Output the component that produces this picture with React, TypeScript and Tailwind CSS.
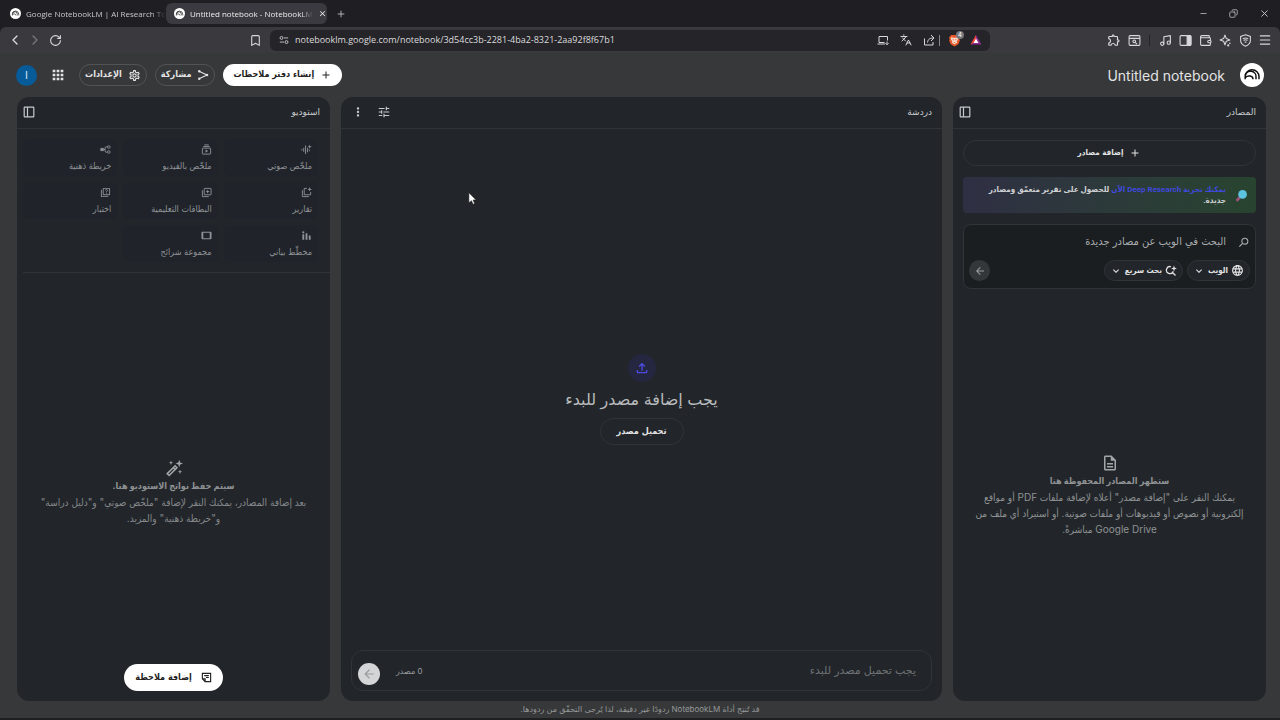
import type { ReactNode } from 'react'
import {
  MdAdd, MdApps, MdArrowBack, MdClose, MdExpandMore, MdLanguage,
  MdMoreVert, MdOutlineDescription, MdOutlineExtension, MdOutlineFileUpload, MdOutlineQuiz,
  MdOutlineSettings, MdOutlineTablet, MdSearch, MdTune,
} from 'react-icons/md'
import {
  Bookmark, ChevronLeft, ChevronRight, Copy, Languages, Menu, Minus, Music, Plus,
  RotateCw, Wallet, X,
} from 'lucide-react'

type IconProps = { className?: string }

function NotebookLogo({ className }: IconProps) {
  return (
    <svg viewBox="0 0 24 24" className={className} fill="none" aria-hidden="true">
      <circle cx="12" cy="12" r="12" fill="#fff" />
      <g stroke="#111" strokeWidth="1.500">
        <path d="M5.200 16.200v-2.600a6.900 6.900 0 0 1 13.800 0v2.600" />
        <path d="M5.200 12.400a5.500 5.500 0 0 1 10.800 2v1.800" />
        <path d="M5.200 14.600c2.800-2.600 7.800-1.900 7.800 1.600" />
      </g>
    </svg>
  )
}

function PanelIcon({ className }: IconProps) {
  return (
    <svg viewBox="0 0 20 20" className={className} fill="none" stroke="currentColor" strokeWidth="2" aria-hidden="true">
      <rect x="2" y="2" width="16" height="16" rx="1" />
      <path d="M7.500 2v16" />
    </svg>
  )
}

function ShareIcon({ className }: IconProps) {
  return (
    <svg viewBox="0 0 24 24" className={className} fill="none" stroke="currentColor" strokeWidth="2.200" aria-hidden="true">
      <path d="M5 5l15 7-15 7" />
      <g fill="currentColor" stroke="none">
        <circle cx="4.500" cy="4.500" r="2.500" />
        <circle cx="20" cy="12" r="2.500" />
        <circle cx="4.500" cy="19.500" r="2.500" />
      </g>
    </svg>
  )
}

function AudioIcon({ className }: IconProps) {
  return (
    <svg viewBox="0 0 24 24" className={className} fill="currentColor" aria-hidden="true">
      <path d="M1 11h2v3H1zM5 8h2v9H5zM9 3h2v19H9zM13 8h2v10h-2zM17 12h2v4h-2z" />
      <path d="M19 1l1.200 3.800L24 6l-3.800 1.200L19 11l-1.200-3.800L14 6l3.800-1.200z" />
    </svg>
  )
}

function VideoIcon({ className }: IconProps) {
  return (
    <svg viewBox="0 0 24 24" className={className} fill="none" stroke="currentColor" strokeWidth="2" aria-hidden="true">
      <path d="M7 2h10M5 5.500h14" />
      <rect x="3" y="9" width="18" height="13" rx="1" />
      <path d="M10 12v7l5.500-3.500z" fill="currentColor" stroke="none" />
    </svg>
  )
}

function MindMapIcon({ className }: IconProps) {
  return (
    <svg viewBox="0 0 24 24" className={className} fill="none" stroke="currentColor" strokeWidth="2" aria-hidden="true">
      <rect x="2" y="9.500" width="5" height="5" fill="currentColor" />
      <path d="M7 12h4m5-6h-2c-2 0-3 1-3 3v6c0 2 1 3 3 3h2" />
      <rect x="16" y="4" width="6" height="5" rx="2" />
      <rect x="16" y="15" width="6" height="5" rx="2" />
    </svg>
  )
}

function ReportIcon({ className }: IconProps) {
  return (
    <svg viewBox="0 0 24 24" className={className} fill="none" stroke="currentColor" strokeWidth="2" aria-hidden="true">
      <path d="M3 7v14h14M13 3H7v14h14v-6" />
      <path d="M19 0l1.300 3.700L24 5l-3.700 1.300L19 10l-1.300-3.700L14 5l3.700-1.300z" fill="currentColor" stroke="none" />
    </svg>
  )
}

function CardsIcon({ className }: IconProps) {
  return (
    <svg viewBox="0 0 24 24" className={className} fill="none" stroke="currentColor" strokeWidth="2" aria-hidden="true">
      <path d="M3 7v14h14" />
      <rect x="7" y="3" width="15" height="14" rx="1" />
      <path d="M14.500 6l1.300 2.800 2.800 1.200-2.800 1.200-1.300 2.800-1.300-2.800-2.800-1.200 2.800-1.200z" fill="currentColor" stroke="none" />
    </svg>
  )
}

function ChartIcon({ className }: IconProps) {
  return (
    <svg viewBox="0 0 24 24" className={className} fill="currentColor" aria-hidden="true">
      <circle cx="5" cy="5" r="2.500" />
      <path d="M3 9h4v12H3zM10 7h4v14h-4zM17 12h4v9h-4z" />
    </svg>
  )
}

function WandIcon({ className }: IconProps) {
  return (
    <svg viewBox="0 0 24 24" className={className} fill="none" stroke="currentColor" strokeWidth="2" aria-hidden="true">
      <path d="M3 19.500L13.500 9l2.500 2.500L5.500 22zM11 11.500l2.500 2.500" />
      <path d="M19 1l1.300 3.700L24 6l-3.700 1.300L19 11l-1.300-3.700L14 6l3.700-1.300zM8 2l.8 2.200L11 5l-2.200.8L8 8l-.8-2.200L5 5l2.200-.8zM20 14l.8 2.200L23 17l-2.200.8L20 20l-.8-2.200L17 17l2.200-.8z" fill="currentColor" stroke="none" />
    </svg>
  )
}

function NoteIcon({ className }: IconProps) {
  return (
    <svg viewBox="0 0 24 24" className={className} fill="none" stroke="currentColor" strokeWidth="2.500" aria-hidden="true">
      <path d="M3 3h18v18H9l-6-6zM3 15h6v6M7 8h10M11 12h6" />
    </svg>
  )
}

function QuickSearchIcon({ className }: IconProps) {
  return (
    <svg viewBox="0 0 24 24" className={className} fill="none" stroke="currentColor" strokeWidth="2.500" aria-hidden="true">
      <path d="M12 3.500a7 7 0 1 0 4.500 9M15 15l6 6" />
      <path d="M18 1l1.500 4.500L24 7l-4.500 1.500L18 13l-1.500-4.500L12 7l4.500-1.500z" fill="currentColor" stroke="none" />
    </svg>
  )
}

function SiteIcon({ className }: IconProps) {
  return (
    <svg viewBox="0 0 24 24" className={className} fill="none" stroke="currentColor" strokeWidth="2" aria-hidden="true">
      <circle cx="6" cy="7" r="3.500" />
      <circle cx="18" cy="17" r="3.500" />
      <path d="M12 7h10M2 17h10" />
    </svg>
  )
}

function InstallIcon({ className }: IconProps) {
  return (
    <svg viewBox="0 0 24 24" className={className} fill="none" stroke="currentColor" strokeWidth="2" aria-hidden="true">
      <path d="M21 13V5H4v12h11M1 20h15M20 15v6M17 18.500l3 3 3-3" />
    </svg>
  )
}

function SendOutIcon({ className }: IconProps) {
  return (
    <svg viewBox="0 0 24 24" className={className} fill="none" stroke="currentColor" strokeWidth="2" aria-hidden="true">
      <path d="M3 9v13h17v-6M16 2l6 6-6 6M21 8c-7 0-11 2-12 9" />
    </svg>
  )
}

function TabSearchIcon({ className }: IconProps) {
  return (
    <svg viewBox="0 0 24 24" className={className} fill="none" stroke="currentColor" strokeWidth="2" aria-hidden="true">
      <rect x="2" y="3" width="20" height="18" rx="2" />
      <path d="M2 8h20M13.500 15.500l3 3" />
      <circle cx="11.500" cy="13.500" r="2.500" />
    </svg>
  )
}

function SidebarIcon({ className }: IconProps) {
  return (
    <svg viewBox="0 0 24 24" className={className} fill="none" stroke="currentColor" strokeWidth="2" aria-hidden="true">
      <rect x="2" y="3" width="20" height="18" rx="2" />
      <path d="M15 3h5a2 2 0 0 1 2 2v14a2 2 0 0 1-2 2h-5z" fill="currentColor" />
    </svg>
  )
}

function LeoIcon({ className }: IconProps) {
  return (
    <svg viewBox="0 0 24 24" className={className} fill="none" stroke="currentColor" strokeWidth="2" strokeLinejoin="round" aria-hidden="true">
      <path d="M11 2l2.500 6.500L20 11l-6.500 2.500L11 20l-2.500-6.500L2 11l6.500-2.500z" />
      <circle cx="20" cy="17" r="1.500" fill="currentColor" stroke="none" />
      <circle cx="17" cy="21" r="2" fill="currentColor" stroke="none" />
    </svg>
  )
}

function VpnIcon({ className }: IconProps) {
  return (
    <svg viewBox="0 0 24 24" className={className} fill="none" stroke="currentColor" strokeWidth="2" aria-hidden="true">
      <path d="M12 1.500l9 3V12c0 5-4 8.500-9 10.500C7 20.500 3 17 3 12V4.500z" />
      <path d="M7 9c3-2 7-2 10 0M8.500 12c2-1.500 5-1.500 7 0M10.500 15h3" />
    </svg>
  )
}

function BraveIcon({ className }: IconProps) {
  return (
    <svg viewBox="0 0 24 24" className={className} aria-hidden="true">
      <path d="M6 2h12l4 4-1 4 1 2-3 7-7 4-7-4-3-7 1-2-1-4z" fill="#e8592b" />
      <path d="M6 6l4 1h4l4-1 1 3-3 5 1 2-5 3-5-3 1-2-3-5z" fill="#f7d9cd" />
      <path d="M8 9l3 1-1 2zM16 9l-3 1 1 2zM10 15h4l-2 2z" fill="#e8592b" />
    </svg>
  )
}

function BatIcon({ className }: IconProps) {
  return (
    <svg viewBox="0 0 24 24" className={className} aria-hidden="true">
      <path d="M12 2L1 21h22z" fill="#8a2a8f" />
      <path d="M12 2L1 21l11-6z" fill="#e8442f" />
      <path d="M12 9l-5 9h10z" fill="#fff" />
    </svg>
  )
}

function ToolButton({ label, children, className = '' }: { label: string; children: ReactNode; className?: string }) {
  return (
    <button aria-label={label} className={`flex size-5 shrink-0 items-center justify-center ${className}`}>
      {children}
    </button>
  )
}

function TabStrip() {
  return (
    <div className="flex h-[27px] items-center bg-[#1f1e23] pl-[10px] font-['Open_Sans','Noto_Sans',sans-serif] text-[8px] text-[#c9c9cc]">
      <div className="flex w-[156px] items-center gap-[5px]">
        <NotebookLogo className="size-[11px] shrink-0" />
        <span className="whitespace-nowrap mask-r-from-90%">Google NotebookLM | AI Research To</span>
      </div>
      <div className="flex h-[21px] w-[161px] items-center gap-[5px] rounded-md bg-[#3b3a40] px-2 text-[#ececee]">
        <NotebookLogo className="size-[11px] shrink-0" />
        <span className="whitespace-nowrap mask-r-from-90%">Untitled notebook - NotebookLM</span>
        <button aria-label="Close tab" className="ml-auto mr-[-2px]"><MdClose className="size-[9px]" /></button>
      </div>
      <button aria-label="New tab" className="ml-[9px]"><Plus className="size-[10px]" /></button>
      <div className="ml-auto flex items-center gap-[21px] pr-[10px]">
        <button aria-label="Minimize"><Minus className="size-[9px]" /></button>
        <button aria-label="Restore"><Copy className="size-[9px] -scale-x-100" /></button>
        <button aria-label="Close window"><X className="size-[11px]" /></button>
      </div>
    </div>
  )
}

function Toolbar() {
  return (
    <div className="flex h-[26px] items-center rounded-t-md bg-[#3a393e] px-[5px] text-[#d8d8da]">
      <div className="flex">
        <ToolButton label="Back"><ChevronLeft className="size-4" /></ToolButton>
        <ToolButton label="Forward" className="text-[#77767b]"><ChevronRight className="size-4" /></ToolButton>
        <ToolButton label="Reload"><RotateCw className="size-[13px]" /></ToolButton>
      </div>
      <div className="ml-auto mr-[114px] flex max-w-[745px] flex-1 items-center gap-[5px]">
        <ToolButton label="Bookmark"><Bookmark className="size-[13px]" /></ToolButton>
        <div className="flex h-[21px] flex-1 items-center rounded-md bg-[#252429] px-1">
          <ToolButton label="Site settings" className="mr-[1px]"><SiteIcon className="size-[10px]" /></ToolButton>
          <input
            aria-label="Address"
            defaultValue="notebooklm.google.com/notebook/3d54cc3b-2281-4ba2-8321-2aa92f8f67b1"
            className="min-w-0 flex-1 bg-transparent font-['Open_Sans','Noto_Sans',sans-serif] text-[9px] text-[#dcdcde] outline-none"
          />
          <ToolButton label="Install app" className="mr-[3px]"><InstallIcon className="size-[12px]" /></ToolButton>
          <ToolButton label="Translate" className="mr-[3px]"><Languages className="size-[12px]" /></ToolButton>
          <ToolButton label="Share"><SendOutIcon className="size-[12px]" /></ToolButton>
          <span className="h-[11px] border-l border-[#88878c]" />
          <ToolButton label="Shields" className="relative ml-1 mr-[2px]">
            <BraveIcon className="size-[13px]" />
            <span className="absolute right-0 top-[1px] size-2 rounded-full bg-[#77777c] text-center text-[6px] leading-[8px] text-white">4</span>
          </ToolButton>
          <ToolButton label="Rewards"><BatIcon className="size-3" /></ToolButton>
        </div>
      </div>
      <div className="flex items-center">
        <ToolButton label="Extensions"><MdOutlineExtension className="size-[14px]" /></ToolButton>
        <ToolButton label="Search tabs"><TabSearchIcon className="size-[13px]" /></ToolButton>
        <span className="mx-[5px] h-[11px] border-l border-[#242327]" />
        <ToolButton label="Music"><Music className="size-[13px]" /></ToolButton>
        <ToolButton label="Sidebar"><SidebarIcon className="size-[13px]" /></ToolButton>
        <ToolButton label="Wallet"><Wallet className="size-[13px]" /></ToolButton>
        <ToolButton label="Leo"><LeoIcon className="size-[13px]" /></ToolButton>
        <ToolButton label="VPN"><VpnIcon className="size-[13px]" /></ToolButton>
        <ToolButton label="Menu"><Menu className="size-[14px]" /></ToolButton>
      </div>
    </div>
  )
}

function Header() {
  return (
    <header className="flex h-11 items-center gap-2 px-4">
      <NotebookLogo className="size-6" />
      <h1 dir="ltr" className="mr-[7px] text-[14px] text-[#e3e3e4]">Untitled notebook</h1>
      <button className="mr-auto flex h-[22px] items-center gap-[6px] rounded-full bg-white px-[10px] font-['DejaVu_Sans_Condensed','DejaVu_Sans',sans-serif] text-[9px] font-bold text-[#222]">
        <MdAdd className="size-3" />
        إنشاء دفتر ملاحظات
      </button>
      <button className="flex h-[22px] items-center gap-[6px] rounded-full border border-[#515355] px-[5px] font-['DejaVu_Sans_Condensed','DejaVu_Sans',sans-serif] text-[9px] font-bold text-[#e3e3e4]">
        <ShareIcon className="size-3" />
        مشاركة
      </button>
      <button className="flex h-[22px] items-center gap-[6px] rounded-full border border-[#515355] px-[5px] font-['DejaVu_Sans_Condensed','DejaVu_Sans',sans-serif] text-[9px] font-bold text-[#e3e3e4]">
        <MdOutlineSettings className="size-[13px]" />
        الإعدادات
      </button>
      <button aria-label="تطبيقات Google" className="mx-[5px] text-[#e3e3e4]"><MdApps className="size-4" /></button>
      <button aria-label="الحساب" className="size-[21px] rounded-full bg-[#075b98] text-[11px] text-[#cfe3f3]">I</button>
    </header>
  )
}

function PanelHeader({ title, children, className = 'pl-[6px]' }: { title: string; children: ReactNode; className?: string }) {
  return (
    <div className={`flex h-8 shrink-0 items-center justify-between border-b border-[#303438] pb-[1px] pr-[10px] text-[#c7cacd] ${className}`}>
      <h2 className="text-[9px]">{title}</h2>
      <div className="flex items-center gap-3">{children}</div>
    </div>
  )
}

function SourcesPanel() {
  return (
    <section className="flex w-[313px] shrink-0 flex-col rounded-xl bg-[#22262a]">
      <PanelHeader title="المصادر">
        <button aria-label="تصغير المصادر"><PanelIcon className="size-3" /></button>
      </PanelHeader>
      <div className="flex flex-col gap-[11px] px-[10px] pt-[11px]">
        <button className="flex h-[26px] items-center justify-center gap-[6px] rounded-full border border-[#303438] font-['DejaVu_Sans_Condensed','DejaVu_Sans',sans-serif] text-[8px] font-bold text-[#e3e3e4]">
          <MdAdd className="size-3" />
          إضافة مصادر
        </button>
        <div className="flex min-h-[36px] items-center gap-[9px] rounded-sm bg-linear-to-l from-[#28442f] to-[#2f2f43] px-2 text-[#cfd1d3]">
          <svg viewBox="0 0 24 24" className="size-[13px] shrink-0" aria-hidden="true">
            <path d="M9 15l-6 7" stroke="#a0527c" strokeWidth="5" />
            <circle cx="14" cy="10" r="8" fill="#5cc4e0" />
          </svg>
          <p className="font-['Roboto','DejaVu_Sans_Condensed','DejaVu_Sans',sans-serif] text-[8px] font-bold leading-[11px]">
            <a href="#deep-research" className="text-[#3f49dc]">يمكنك تجربة Deep Research الآن</a> للحصول على تقرير متعمّق ومصادر جديدة.
          </p>
        </div>
        <div className="rounded-lg border border-[#303438] bg-[#1a1e21] px-[5px] pb-[7px] pt-[6px]">
          <label className="flex h-[22px] items-center gap-[11px] text-[#a9acae]">
            <MdSearch className="size-[13px] -scale-x-100" />
            <input
              aria-label="البحث في الويب عن مصادر جديدة"
              placeholder="البحث في الويب عن مصادر جديدة"
              className="min-w-0 flex-1 bg-transparent font-['DejaVu_Sans_Condensed','DejaVu_Sans',sans-serif] text-[11px] outline-none placeholder:text-[#a9acae]"
            />
          </label>
          <div className="mt-[7px] flex items-center gap-1 font-['DejaVu_Sans_Condensed','DejaVu_Sans',sans-serif] text-[8px] font-bold text-[#e3e3e4]">
            <button aria-haspopup="menu" className="flex h-[21px] items-center gap-[3px] rounded-full border border-[#303438] bg-[#22262a] px-[5px]">
              <MdLanguage className="size-[13px]" />
              الويب
              <MdExpandMore className="size-3" />
            </button>
            <button aria-haspopup="menu" className="flex h-[21px] items-center gap-[3px] rounded-full border border-[#303438] bg-[#22262a] px-[5px]">
              <QuickSearchIcon className="size-3" />
              بحث سريع
              <MdExpandMore className="size-3" />
            </button>
            <button aria-label="إرسال" className="mr-auto flex size-[21px] items-center justify-center rounded-full bg-[#34373a] text-[#9a9da0]">
              <MdArrowBack className="size-3" />
            </button>
          </div>
        </div>
      </div>
      <div className="flex flex-1 flex-col items-center justify-center px-4 text-center font-['Inter','DejaVu_Sans_Condensed','DejaVu_Sans',sans-serif] text-[10px] leading-4 text-[#8f9294]">
        <MdOutlineDescription className="mb-[1px] size-[18px] text-[#a3a6a8]" />
        <h3 className="text-[9px] font-bold">ستظهر المصادر المحفوظة هنا</h3>
        <p>
          يمكنك النقر على "إضافة مصدر" أعلاه لإضافة ملفات PDF أو مواقع إلكترونية أو نصوص أو فيديوهات أو ملفات صوتية. أو استيراد أي ملف من Google Drive مباشرةً.
        </p>
      </div>
    </section>
  )
}

function ChatPanel() {
  return (
    <section className="flex min-w-0 flex-1 flex-col rounded-xl bg-[#22262a]">
      <PanelHeader title="دردشة" className="pl-[10px]">
        <button aria-label="ضبط المحادثة"><MdTune className="size-[14px]" /></button>
        <button aria-label="خيارات المحادثة"><MdMoreVert className="size-[14px]" /></button>
      </PanelHeader>
      <div className="flex flex-1 flex-col items-center justify-center pt-5">
        <span className="flex size-7 items-center justify-center rounded-full bg-[#26274a]/70 text-[#4b4ee0]">
          <MdOutlineFileUpload className="size-4" />
        </span>
        <p className="mb-[7px] mt-[5px] text-[16px] leading-6 text-[#b9bbbd]">يجب إضافة مصدر للبدء</p>
        <button className="h-[27px] rounded-full border border-[#303438] px-4 font-['DejaVu_Sans_Condensed','DejaVu_Sans',sans-serif] text-[9px] font-bold text-[#e3e3e4]">تحميل مصدر</button>
      </div>
      <div className="mx-[10px] mb-[10px] flex h-[41px] items-center rounded-xl border border-[#303438] pl-[6px] pr-[15px]">
        <input
          aria-label="مربّع طلب البحث"
          placeholder="يجب تحميل مصدر للبدء"
          className="min-w-0 flex-1 bg-transparent text-[11px] outline-none placeholder:text-[#6f7275]"
        />
        <span className="ml-4 text-[8px] text-[#9a9da0]">0 مصدر</span>
        <button aria-label="إرسال" className="mt-[6px] flex size-[22px] items-center justify-center rounded-full bg-[#d3d5d6] text-[#999b9d]">
          <MdArrowBack className="size-[14px]" />
        </button>
      </div>
    </section>
  )
}

const tools = [
  { label: 'ملخّص صوتي', Icon: AudioIcon },
  { label: 'ملخّص بالفيديو', Icon: VideoIcon },
  { label: 'خريطة ذهنية', Icon: MindMapIcon },
  { label: 'تقارير', Icon: ReportIcon },
  { label: 'البطاقات التعليمية', Icon: CardsIcon },
  { label: 'اختبار', Icon: MdOutlineQuiz },
  { label: 'مخطّط بياني', Icon: ChartIcon },
  { label: 'مجموعة شرائح', Icon: MdOutlineTablet },
]

function StudioPanel() {
  return (
    <section className="relative flex w-[313px] shrink-0 flex-col rounded-xl bg-[#22262a]">
      <PanelHeader title="استوديو">
        <button aria-label="تصغير الاستوديو"><PanelIcon className="size-3" /></button>
      </PanelHeader>
      <div className="ml-[6px] grid grid-cols-3 gap-[6px] border-b border-[#303438] pb-[10px] pr-3 pt-[10px]">
        {tools.map(({ label, Icon }) => (
          <button key={label} className="flex h-[37px] flex-col items-start justify-between rounded-md bg-[#20242a] px-[6px] pb-1 pt-[5px] font-['DejaVu_Sans_Condensed','DejaVu_Sans',sans-serif] text-[9px] leading-3 text-[#8f9296]">
            <Icon className="size-[11px]" />
            <span className="whitespace-nowrap">{label}</span>
          </button>
        ))}
      </div>
      <div className="flex flex-1 flex-col items-center justify-center px-4 pt-[10px] text-center font-['Inter','DejaVu_Sans_Condensed','DejaVu_Sans',sans-serif] text-[10px] leading-4 text-[#85888a]">
        <WandIcon className="mb-[1px] size-[18px] text-[#a3a6a8]" />
        <h3 className="text-[9px] font-bold text-[#8f9294]">سيتم حفظ نواتج الاستوديو هنا.</h3>
        <p>بعد إضافة المصادر، يمكنك النقر لإضافة "ملخّص صوتي" و"دليل دراسة" و"خريطة ذهنية" والمزيد.</p>
      </div>
      <div className="absolute inset-x-0 bottom-[10px] flex justify-center">
        <button className="flex h-[27px] items-center gap-[9px] rounded-full bg-white px-[11px] font-['DejaVu_Sans_Condensed','DejaVu_Sans',sans-serif] text-[9px] font-bold text-[#222]">
          <NoteIcon className="size-[11px]" />
          إضافة ملاحظة
        </button>
      </div>
    </section>
  )
}

export default function App() {
  return (
    <div className="relative flex min-h-screen flex-col bg-[#1f1e23] font-['Inter','Noto_Sans','DejaVu_Sans',sans-serif]">
      <TabStrip />
      <Toolbar />
      <div dir="rtl" className="flex flex-1 flex-col border-b-2 border-[#1d1f21] bg-[#373839]">
        <Header />
        <main className="flex flex-1 gap-[11px] pl-[17px] pr-[14px]">
          <SourcesPanel />
          <ChatPanel />
          <StudioPanel />
        </main>
        <footer className="pb-[1px] text-center text-[8px] leading-4 text-[#96989a]">
          قد تُنتِج أداة NotebookLM ردودًا غير دقيقة، لذا يُرجى التحقّق من ردودها.
        </footer>
      </div>
      <svg viewBox="0 0 12 18" className="pointer-events-none absolute left-[468px] top-[192px] h-[13px] w-[9px]" aria-hidden="true">
        <path d="M1 1v14l3.500-3 2.200 5 2.300-1-2.200-5H11z" fill="#fff" stroke="#222" strokeWidth="0.800" />
      </svg>
    </div>
  )
}
